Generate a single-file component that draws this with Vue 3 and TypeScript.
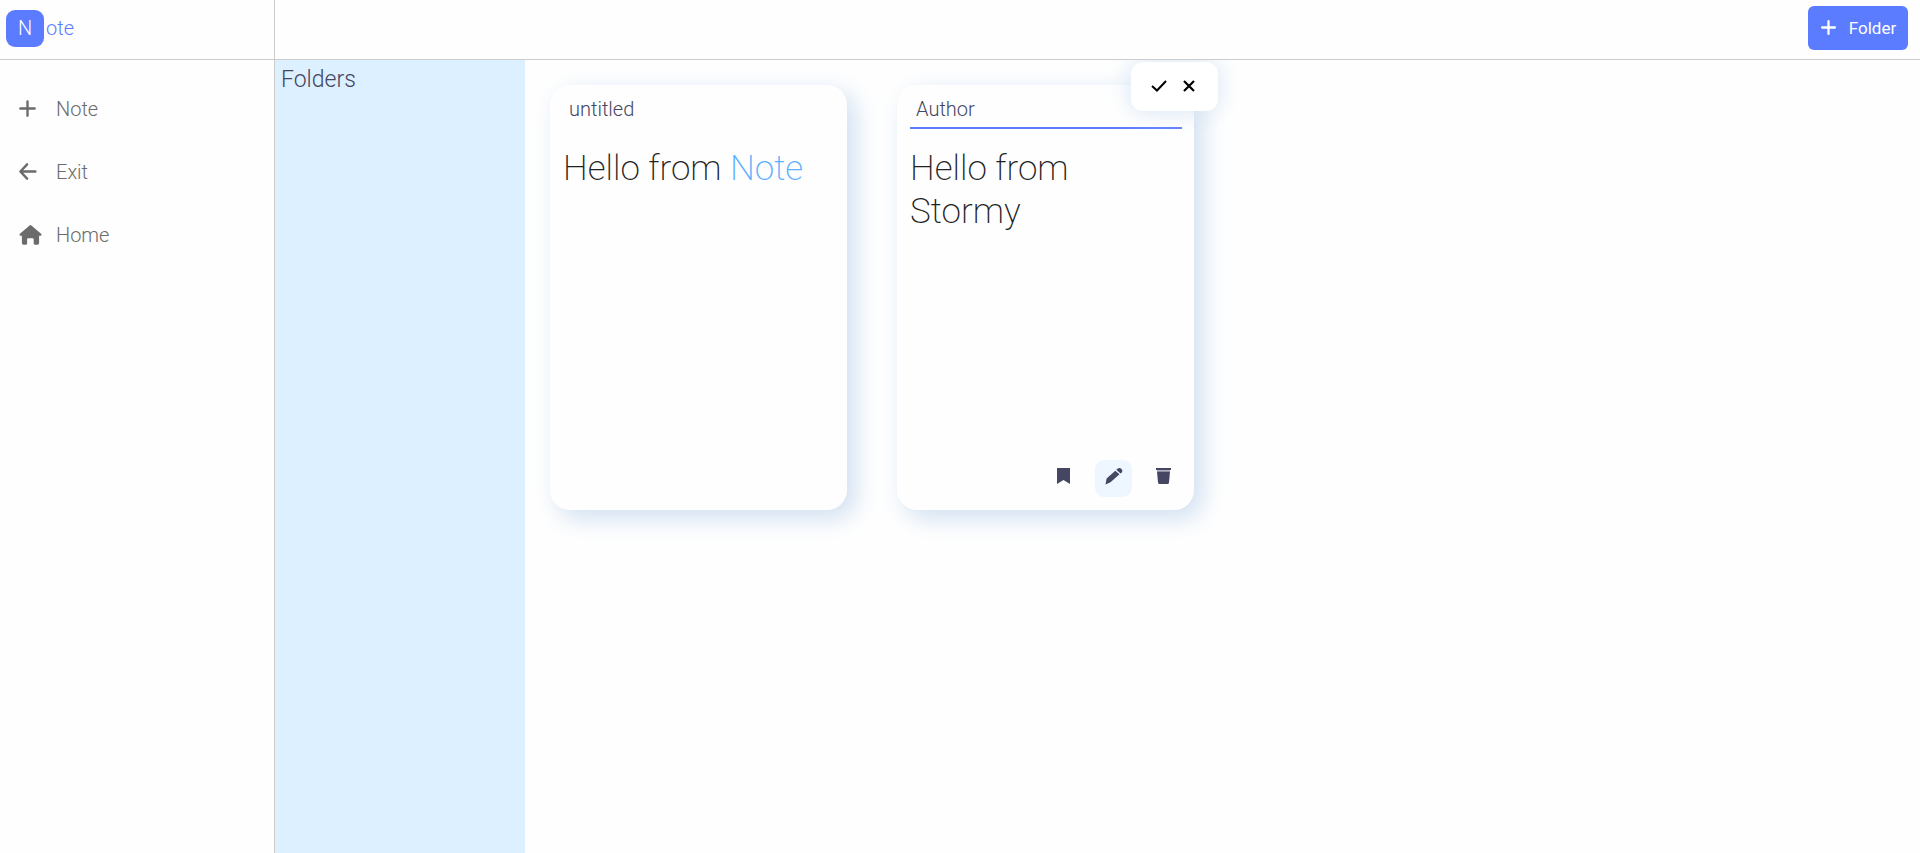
<script setup lang="ts">
import { ref } from 'vue'

interface NavItem {
  label: string
  path: string
  size: number
}

const plus = 'M12 3v18M3 12h18'
const nav: NavItem[] = [
  { label: 'Note', path: plus, size: 19 },
  { label: 'Exit', path: 'M11.5 3 3 12l8.500 9M4 12h18', size: 19 },
]

const firstTitle = ref('untitled')
const secondTitle = ref('Author')
</script>

<template>
  <div class="page">
    <header class="top">
      <a class="brand" href="#"><span class="mark">N</span>ote</a>
      <div class="bar">
        <button class="add" type="button">
          <svg width="17" height="17" viewBox="0 0 24 24" fill="none" stroke="currentColor" stroke-width="3.2" stroke-linecap="round"><path :d="plus" /></svg>
          Folder
        </button>
      </div>
    </header>
    <div class="body">
      <nav class="side">
        <a v-for="item in nav" :key="item.label" class="link" href="#">
          <span class="glyph">
            <svg :width="item.size" :height="item.size" viewBox="0 0 24 24" fill="none" stroke="currentColor" stroke-width="3" stroke-linecap="round" stroke-linejoin="round"><path :d="item.path" /></svg>
          </span>
          {{ item.label }}
        </a>
        <a class="link" href="#">
          <span class="glyph">
            <svg width="24" height="20" viewBox="-1 0 23 20" fill="currentColor"><path d="M10.100.4a1.400 1.400 0 0 1 1.800 0l9.700 8.400c.8.800.300 2-.700 2h-1.300v6.900c0 1.300-.900 2.100-2.100 2.100h-2.100c-.700 0-1.200-.500-1.200-1.200v-4.100c0-.800-.500-1.300-1.300-1.300H8.900c-.8 0-1.300.500-1.300 1.300v4.100c0 .700-.500 1.200-1.200 1.200H4.500c-1.200 0-2.100-.800-2.100-2.100v-6.900H1.100c-1 0-1.500-1.200-.700-2z" /></svg>
          </span>
          Home
        </a>
      </nav>
      <aside class="folders"><h2>Folders</h2></aside>
      <main class="notes">
        <article class="card">
          <input v-model="firstTitle" class="title" aria-label="Note title" />
          <p class="text">Hello from <span class="accent">Note</span></p>
        </article>
        <article class="card">
          <input v-model="secondTitle" class="title editing" aria-label="Note title" />
          <p class="text">Hello from Stormy</p>
          <div class="popup">
            <button type="button" aria-label="Save">
              <svg width="16" height="12" viewBox="0 0 16 12" fill="none" stroke="currentColor" stroke-width="2"><path d="m1 6 5 4.500L15 1" /></svg>
            </button>
            <button type="button" aria-label="Cancel">
              <svg width="12" height="12" viewBox="0 0 12 12" fill="none" stroke="currentColor" stroke-width="2.200"><path d="m1 1 10 10M11 1 1 11" /></svg>
            </button>
          </div>
          <div class="tools">
            <button type="button" aria-label="Bookmark">
              <svg width="13" height="16" viewBox="0 0 13 16" fill="currentColor"><path d="M0 0h13v16l-6.500-4L0 16z" /></svg>
            </button>
            <button class="active" type="button" aria-label="Edit">
              <svg width="18" height="17" viewBox="0 0 18 17" fill="currentColor"><path d="M10.300 2.700 14.500 6.300 5.500 14.200.5 16.500 1.600 10.600zM11.300 1.800 12.600.7C13.700-.1 15-.1 16.200.8c1.200 1.100 1.500 2.500.6 3.600l-1.300 1.200z" /></svg>
            </button>
            <button type="button" aria-label="Delete">
              <svg width="15" height="16" viewBox="0 0 15 16" fill="currentColor"><path d="M0 0h15v2H0z" /><path d="M1 2h13v1.500H1z" opacity=".4" /><path d="M1 3.500h13L13 14.500q-.1 1.500-1.600 1.500H3.600Q2.100 16 2 14.500z" /></svg>
            </button>
          </div>
        </article>
      </main>
    </div>
  </div>
</template>

<style>
body {
  margin: 0;
}
</style>

<style scoped>
.page {
  box-sizing: border-box;
  min-height: 100vh;
  display: flex;
  flex-direction: column;
  background: #fefefe;
  font-family: Roboto, "Liberation Sans", sans-serif;
  font-size: 20px;
  font-weight: 300;
  color: #444662;
}
.page * {
  box-sizing: border-box;
}
a {
  text-decoration: none;
}
button,
input {
  font: inherit;
  color: inherit;
  border: 0;
  background: none;
  padding: 0;
}
button {
  display: flex;
  align-items: center;
  justify-content: center;
  cursor: pointer;
}
.top {
  display: flex;
  height: 60px;
  border-bottom: 1px solid #ccc;
}
.brand {
  flex: 0 0 275px;
  display: flex;
  align-items: center;
  gap: 2px;
  padding: 0 6px 3px;
  border-right: 1px solid #ccc;
  color: #5c7cff;
}
.mark {
  width: 38px;
  height: 37px;
  border-radius: 9px;
  display: grid;
  place-items: center;
  background: #5c7cff;
  color: #fff;
}
.bar {
  flex: 1;
  display: flex;
  justify-content: flex-end;
  padding: 6px 12px;
}
.add {
  width: 100px;
  height: 44px;
  gap: 12px;
  padding-bottom: 1px;
  border-radius: 6px;
  background: #5c7cff;
  color: #fff;
  font-size: 17px;
  font-weight: 400;
}
.body {
  flex: 1;
  display: flex;
}
.side {
  flex: 0 0 275px;
  display: flex;
  flex-direction: column;
  gap: 22px;
  padding: 28px 18px;
  border-right: 1px solid #ccc;
}
.link {
  display: flex;
  align-items: center;
  height: 41px;
  color: #6b6b6b;
}
.glyph {
  flex: 0 0 38px;
  display: flex;
}
.folders {
  flex: 0 0 250px;
  padding: 6px;
  background: #dcf0ff;
}
.folders h2 {
  margin: 0;
  font-size: 23px;
  line-height: 27px;
  font-weight: 300;
}
.notes {
  flex: 1;
  display: flex;
  flex-wrap: wrap;
  align-content: flex-start;
  gap: 50px;
  padding: 25px;
  overflow: hidden;
}
.card {
  position: relative;
  width: 297px;
  min-height: 425px;
  padding: 4px 12px 13px 13px;
  display: flex;
  flex-direction: column;
  border-radius: 20px;
  background: #fefefe;
  box-shadow: 8px 8px 24px #cfdff1;
}
.title {
  width: 100%;
  height: 40px;
  padding: 2px 6px 0;
  border-bottom: 2px solid transparent;
  outline: 0;
}
.editing {
  border-color: #5c7cff;
}
.text {
  margin: 18px 0 0;
  font-size: 35px;
  line-height: 43px;
  font-weight: 200;
  color: #222;
}
.accent {
  color: #5caeff;
}
.popup {
  position: absolute;
  top: -23px;
  right: -24px;
  display: flex;
  align-items: center;
  justify-content: center;
  gap: 16px;
  width: 87px;
  height: 49px;
  padding: 0 3px 2px 0;
  border-radius: 12px;
  background: #fff;
  color: #000;
  box-shadow: 0 0 24px #d6e4f4;
}
.tools {
  display: flex;
  justify-content: flex-end;
  gap: 13px;
  margin-top: auto;
}
.tools button {
  width: 37px;
  height: 37px;
  padding-bottom: 5px;
  border-radius: 9px;
}
.tools .active {
  background: #eef7ff;
}
</style>
